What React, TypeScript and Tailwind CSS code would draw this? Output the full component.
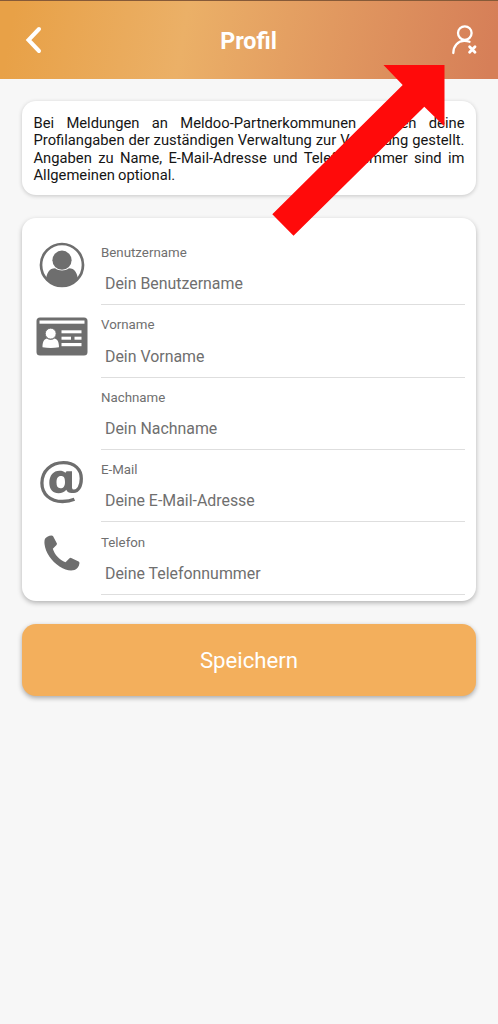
import type { ReactNode } from "react";

const ICON = "#6e6e6e";

function UserIcon() {
  return (
    <svg width="46" height="46" viewBox="0 0 46 46">
      <clipPath id="avatar">
        <circle cx="23" cy="23" r="21.5" />
      </clipPath>
      <circle cx="23" cy="23" r="21" fill="none" stroke={ICON} strokeWidth="2.700" />
      <circle cx="23" cy="18.2" r="9.600" fill={ICON} />
      <path
        clipPath="url(#avatar)"
        d="M7 38C7.500 31 10.500 26.300 16 26.300C20 29.300 26 29.300 30 26.300C35.500 26.300 38.500 31 39 38L34 45H12Z"
        fill={ICON}
      />
    </svg>
  );
}

function CardIcon() {
  return (
    <svg width="52" height="39" viewBox="0 0 52 39">
      <rect x="0.500" y="0.500" width="51" height="38" rx="3.500" fill={ICON} />
      <g fill="#fff">
        <rect x="3.500" y="3.500" width="45" height="3.200" />
        <path d="M6.500 30.300C6.500 25.500 7.800 22.300 10.800 21.600C13 23.200 16.500 23.200 18.700 21.600C21.700 22.300 23 25.500 23 30.300Q14.700 31.500 6.500 30.300Z" />
        <circle cx="14.700" cy="16.600" r="5.400" stroke={ICON} strokeWidth="0.800" />
        <rect x="25.500" y="13.300" width="20" height="3" />
        <rect x="25.500" y="19.700" width="9.500" height="3" />
        <rect x="38.500" y="19.700" width="7" height="3" />
        <rect x="25.500" y="26" width="20" height="3.200" />
      </g>
    </svg>
  );
}

function MailIcon() {
  return (
    <svg width="44" height="43" viewBox="0 0 44 43" fill="none" stroke={ICON}>
      <path
        d="M34.400 38.300C31 39.800 27 40.500 22.500 40.500C10 40.500 1.900 33 1.900 22C1.900 10 11 1.700 23.500 1.700C34.500 1.700 41.300 8.200 41.300 17.500C41.300 25.500 38.200 30.300 33.500 30.300"
        strokeWidth="3.300"
      />
      <path
        fillRule="evenodd"
        d="M25.500 11.800L26.500 10.200H32V26.800Q32 28.700 34.300 28.700V32H31.500Q27.700 32 26.300 28.800C24.500 31 22 32.300 18.500 32.300C13 32.300 9.300 28.300 9.300 21.800C9.300 14.500 13.300 9.700 19.500 9.700C22 9.700 24 10.300 25.500 11.800ZM21 15C17.800 15 16.500 17.200 16.500 21.600C16.500 25.400 17.600 27.300 20.400 27.300C23.500 27.300 25 25.200 25 21C25 17 24 15 21 15Z"
        fill={ICON}
        stroke="none"
      />
    </svg>
  );
}

function PhoneIcon() {
  return (
    <svg width="36" height="36" viewBox="0 0 36 36">
      <path
        d="M1 3.800C2.500 1.500 4.800 0.500 7.500 0.400Q8.600 0.400 9.100 1.300L12.800 8.200Q13.200 9.100 12.500 9.900L8.800 13.800C10.500 19.500 15.500 25 21.500 27.200L25.500 23.300Q26.300 22.600 27.200 23L34.600 26.600Q35.600 27.200 35.400 28.400C35 31.500 33.200 34 30.500 35Q24 36.900 15.500 31.400C7.500 26 1.500 18 0.500 9Q0.200 5.700 1 3.800Z"
        fill={ICON}
      />
    </svg>
  );
}

type Field = { label: string; hint: string; icon?: ReactNode };

const fields: Field[] = [
  { label: "Benutzername", hint: "Dein Benutzername", icon: <div className="pt-[9px]"><UserIcon /></div> },
  { label: "Vorname", hint: "Dein Vorname", icon: <div className="pt-[12px]"><CardIcon /></div> },
  { label: "Nachname", hint: "Dein Nachname" },
  { label: "E-Mail", hint: "Deine E-Mail-Adresse", icon: <div className="pt-[10.500px]"><MailIcon /></div> },
  { label: "Telefon", hint: "Deine Telefonnummer", icon: <div className="pt-[12.500px]"><PhoneIcon /></div> },
];

export default function App() {
  return (
    <div className="relative flex h-[1024px] w-[498px] flex-col overflow-hidden bg-[#f7f7f7] font-[Roboto,sans-serif]">
      <header className="flex h-[78.500px] shrink-0 items-center justify-between border-t border-[#865a38] bg-[linear-gradient(100deg,#e8a147_3%,#ebb067_37%,#d67f58_98%)] pr-[21px] pl-[25px]">
        <svg width="23" height="28" viewBox="0 0 23 28" fill="none" stroke="#fff" strokeWidth="4" strokeLinecap="round" strokeLinejoin="miter">
          <path d="M14 3L3.500 14L14 25" />
        </svg>
        <h1 className="pt-[2px] text-[23.300px] leading-7 font-bold text-white">Profil</h1>
        <svg width="28" height="32" viewBox="0 0 28 32" fill="none" stroke="#fff" strokeWidth="2.300" strokeLinecap="round">
          <circle cx="15.800" cy="9.100" r="6.800" />
          <path d="M4.300 29C4.300 22 8.800 17.100 15 16.900Q18 16.800 20.500 17.800" />
          <path d="M20.600 22.800L26 28.300M26 22.800L20.600 28.300" strokeWidth="2.800" />
        </svg>
      </header>

      <main className="flex flex-col px-[22px] pt-[22px]">
        <section className="h-[94.500px] rounded-[14px] bg-white px-[11.500px] pt-[14.500px] shadow-[0_1px_4px_rgba(0,0,0,0.2)]">
          <p className="text-justify text-[14.750px] leading-[17.300px] [word-spacing:-0.500px] text-[#151515]">
            Bei Meldungen an Meldoo-Partnerkommunen werden deine Profilangaben der zuständigen Verwaltung zur Verfügung
            gestellt. Angaben zu Name, E-Mail-Adresse und Telefonnummer sind im Allgemeinen optional.
          </p>
        </section>

        <section className="mt-[22.500px] h-[383.500px] rounded-[14px] bg-white pt-[15.400px] pr-[11px] shadow-[0_2px_5px_rgba(0,0,0,0.28)]">
          {fields.map((f) => (
            <div key={f.label} className="flex h-[72.400px]">
              <div className="flex w-[79px] shrink-0 justify-center text-[#6e6e6e]">{f.icon}</div>
              <label className="flex flex-1 flex-col border-b border-[#dedede] pt-[12.200px] text-[#6f6f6f]">
                <span className="text-[13.300px] leading-4">{f.label}</span>
                <span className="pt-[13.200px] pl-1 text-[15.900px] leading-5">{f.hint}</span>
              </label>
            </div>
          ))}
        </section>

        <button className="mt-[22.500px] h-[72px] rounded-[14px] bg-[#f3af5c] pt-[2px] text-[22.200px] text-white shadow-[0_2px_5px_rgba(0,0,0,0.32)]">
          Speichern
        </button>
      </main>

      <svg className="pointer-events-none absolute inset-0" width="498" height="1024" viewBox="0 0 498 1024">
        <polygon points="383.500,65 444.500,65 444.500,126.500 424.300,106.700 293.500,235.800 272.300,214.300 402.700,85" fill="#ff0a0a" />
      </svg>
    </div>
  );
}
